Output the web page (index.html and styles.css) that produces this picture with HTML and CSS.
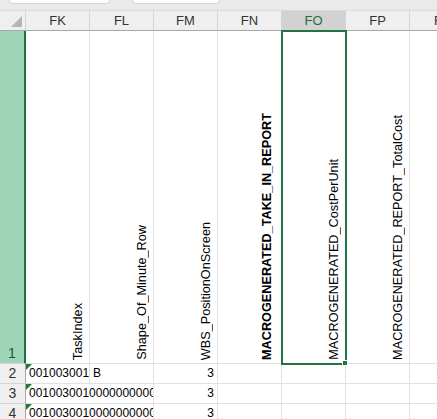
FILE: index.html
```html
<!DOCTYPE html>
<html lang="en">
<head>
    <meta charset="UTF-8">
    <title>Sheet</title>
    <link rel="stylesheet" href="styles.css">
</head>
<body>
<div id="ribbon">
    <div class="box box-name"></div>
    <div class="box box-fx"></div>
</div>
<div id="sheet">
    <!-- column headers -->
    <div class="corner"><span class="tri"></span></div>
    <div class="colhead">FK</div>
    <div class="colhead">FL</div>
    <div class="colhead">FM</div>
    <div class="colhead">FN</div>
    <div class="colhead active">FO</div>
    <div class="colhead">FP</div>
    <div class="colhead last">FQ</div>

    <!-- row 1 -->
    <div class="rowhead active tall">1</div>
    <div class="cell tall"><span class="vtext">TaskIndex</span></div>
    <div class="cell tall"><span class="vtext">Shape_Of_Minute_Row</span></div>
    <div class="cell tall"><span class="vtext">WBS_PositionOnScreen</span></div>
    <div class="cell tall"><span class="vtext bold">MACROGENERATED_TAKE_IN_REPORT</span></div>
    <div class="cell tall selected"><span class="vtext">MACROGENERATED_CostPerUnit</span><span class="handle"></span></div>
    <div class="cell tall"><span class="vtext">MACROGENERATED_REPORT_TotalCost</span></div>
    <div class="cell tall"></div>

    <!-- row 2 -->
    <div class="rowhead">2</div>
    <div class="cell flag">001003001</div>
    <div class="cell">B</div>
    <div class="cell num">3</div>
    <div class="cell"></div>
    <div class="cell"></div>
    <div class="cell"></div>
    <div class="cell"></div>

    <!-- row 3 -->
    <div class="rowhead">3</div>
    <div class="cell flag wide">00100300100000000000</div>
    <div class="cell num">3</div>
    <div class="cell"></div>
    <div class="cell"></div>
    <div class="cell"></div>
    <div class="cell"></div>

    <!-- row 4 -->
    <div class="rowhead">4</div>
    <div class="cell flag wide">00100300100000000000</div>
    <div class="cell num">3</div>
    <div class="cell"></div>
    <div class="cell"></div>
    <div class="cell"></div>
    <div class="cell"></div>
</div>
</body>
</html>
```

FILE: styles.css
```css
*{
    margin: 0;
    padding: 0;
    box-sizing: border-box;
}
body{
    width: 437px;
    height: 419px;
    overflow: hidden;
    background: #fff;
    font-family: "Liberation Sans", Arial, sans-serif;
}
#ribbon{
    height: 11px;
    background: #e9eaeb;
    border-bottom: 1px solid #dcdcdc;
    display: flex;
    overflow: hidden;
}
#ribbon .box{
    height: 4px;
    background: #fff;
    border: 1px solid #d6d6d6;
    border-top: 0;
    border-radius: 0 0 5px 5px;
}
.box-name{
    width: 101px;
    margin-left: 9px;
}
.box-fx{
    width: 88px;
    margin-left: 22px;
}
#sheet{
    display: grid;
    grid-template-columns: 26px repeat(7, 64px);
    grid-template-rows: 20px 333px 20px 20px 20px;
}
.corner, .colhead{
    background: #efefef;
    border-right: 1px solid #d4d4d4;
    border-bottom: 1px solid #a8a8a8;
}
.corner{
    position: relative;
}
.corner .tri{
    position: absolute;
    right: 3px;
    bottom: 3px;
    width: 0;
    height: 0;
    border-left: 11px solid transparent;
    border-bottom: 11px solid #b4b4b4;
}
.colhead{
    font-size: 13px;
    color: #333;
    text-align: center;
    line-height: 19px;
    white-space: nowrap;
    overflow: hidden;
}
.colhead.active{
    background: #d2d2d2;
    color: #1f6e43;
}
.colhead.last{
    border-right: 0;
    text-align: left;
    padding-left: 24px;
}
.rowhead{
    background: #efefef;
    border-right: 1px solid #a8a8a8;
    border-bottom: 1px solid #d4d4d4;
    font-size: 14px;
    color: #333;
    text-align: center;
    line-height: 19px;
}
.rowhead.active{
    background: #9fd5b7;
    color: #14573a;
    border-right: 2px solid #217346;
    display: flex;
    align-items: flex-end;
    justify-content: center;
}
.cell{
    border-right: 1px solid #e1e1e1;
    border-bottom: 1px solid #e1e1e1;
    font-size: 12px;
    color: #000;
    line-height: 19px;
    padding-left: 3px;
    white-space: nowrap;
    overflow: hidden;
    position: relative;
}
.cell.tall{
    display: flex;
    justify-content: flex-end;
    align-items: flex-end;
    padding-right: 5px;
    padding-bottom: 3px;
    overflow: visible;
}
.cell.wide{
    grid-column: span 2;
}
.cell.num{
    text-align: right;
    padding-right: 3px;
}
.cell.flag::before{
    content: "";
    position: absolute;
    left: 0;
    top: 0;
    border-top: 6px solid #1f7a3a;
    border-right: 6px solid transparent;
}
.vtext{
    writing-mode: vertical-rl;
    transform: rotate(180deg);
    font-size: 12.7px;
    line-height: 12px;
}
.vtext.bold{
    font-weight: bold;
    margin-right: 3px;
}
.selected{
    outline: 2px solid #217346;
    outline-offset: -1px;
    z-index: 2;
}
.handle{
    position: absolute;
    right: -3px;
    bottom: -3px;
    width: 6px;
    height: 6px;
    background: #217346;
    border: 1px solid #fff;
}
```
